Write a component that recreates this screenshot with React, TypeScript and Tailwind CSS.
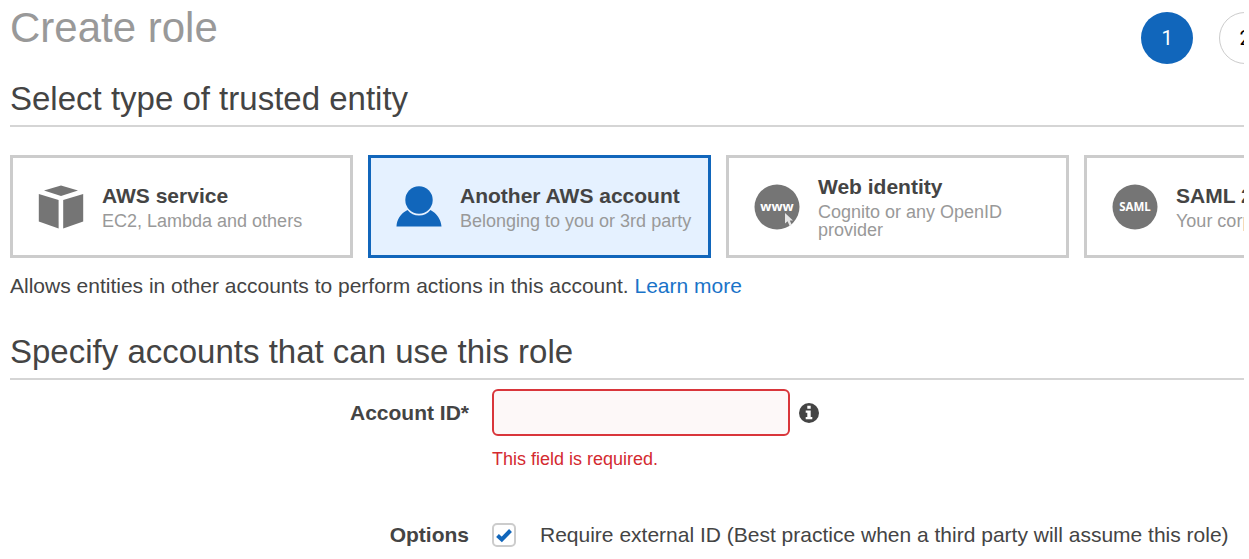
import { useState, type ReactNode } from "react";

function CubeIcon() {
  return (
    <svg viewBox="0 0 46 46" className="size-[46px]" fill="#757575" aria-hidden="true">
      <path d="M23 1.500 40 6.600 23 12 6 6.600Z" />
      <path d="M.8 10 20.600 16V44.500L.8 37.500Z" />
      <path d="M45.200 10 25.200 16V44.500L45.200 37.500Z" />
    </svg>
  );
}

function PersonIcon() {
  return (
    <svg viewBox="0 0 46 46" className="size-[46px]" fill="#1166bb" aria-hidden="true">
      <circle cx="23" cy="16" r="13.700" />
      <path d="M11.500 26C4.500 29.500 .8 35.500 .5 42.500H45.500C45 35.500 41 29.500 34.500 26C31.500 29.800 27.500 31.500 23 31.500S14.500 29.800 11.500 26Z" />
    </svg>
  );
}

function WebIcon() {
  return (
    <svg viewBox="0 0 46 46" className="size-[46px]" aria-hidden="true">
      <circle cx="23" cy="23" r="22.500" fill="#757575" />
      <text x="23" y="27" textAnchor="middle" fill="#fff" fontFamily="Noto Sans, sans-serif" fontWeight="700" fontSize="13">www</text>
      <path d="M31 29V39.500L33.600 37.200L35.600 42L37.800 41L35.800 36.400H39Z" fill="#e6e6e6" />
    </svg>
  );
}

function SamlIcon() {
  return (
    <svg viewBox="0 0 46 46" className="size-[46px]" aria-hidden="true">
      <circle cx="23" cy="23" r="22.500" fill="#757575" />
      <text x="23" y="27" textAnchor="middle" fill="#fff" fontFamily="Noto Sans, sans-serif" fontWeight="700" fontSize="11.500">SAML</text>
    </svg>
  );
}

function InfoIcon() {
  return (
    <svg viewBox="0 0 20 20" className="size-5" aria-hidden="true">
      <circle cx="10" cy="10" r="10" fill="#444" />
      <path d="M8.300 2.800H11.700V5.700H8.300ZM6.700 7.500H11.700V14H13.300V16.300H6.700V14H8.300V9.800H6.700Z" fill="#fff" />
    </svg>
  );
}

type Entity = { id: string; title: string; note: string; icon: ReactNode; wrap?: boolean };

const entities: Entity[] = [
  { id: "service", title: "AWS service", note: "EC2, Lambda and others", icon: <CubeIcon /> },
  { id: "account", title: "Another AWS account", note: "Belonging to you or 3rd party", icon: <PersonIcon /> },
  { id: "web", title: "Web identity", note: "Cognito or any OpenID provider", icon: <WebIcon />, wrap: true },
  { id: "saml", title: "SAML 2.0 federation", note: "Your corporate directory", icon: <SamlIcon /> },
];

function SectionTitle({ children }: { children: ReactNode }) {
  return (
    <h2 className="border-b-2 border-[#d5d5d5] pb-2 text-[33px] leading-[36px] text-[#444]">{children}</h2>
  );
}

export default function App() {
  const [selected, setSelected] = useState("account");
  const [accountId, setAccountId] = useState("");
  const [external, setExternal] = useState(true);

  return (
    <div className="bg-white pr-[5px] font-['Liberation_Sans',Arial,sans-serif] text-[#444]">
      <main className="overflow-hidden pb-3 pl-[10px]">
        <header className="flex h-[81px] items-start justify-between">
          <h1 className="pt-1 text-[42px] leading-[48px] text-[#999]">Create role</h1>
          <ol className="-mr-[27px] flex gap-[26px] pt-3 font-[Roboto,sans-serif] text-[20px]">
            <li className="flex size-[52px] items-center justify-center rounded-full bg-[#1166bb] text-white" aria-current="step">1</li>
            <li className="flex size-[52px] items-center justify-center rounded-full border border-[#ccc] text-black">2</li>
          </ol>
        </header>

        <SectionTitle>Select type of trusted entity</SectionTitle>

        <div className="mt-7 flex gap-[15px]">
          {entities.map((e) => (
            <button
              key={e.id}
              type="button"
              aria-pressed={selected === e.id}
              onClick={() => setSelected(e.id)}
              className={
                "flex h-[103px] w-[343px] shrink-0 items-center gap-[18px] border-3 pl-[25px] text-left " +
                (selected === e.id ? "border-[#1166bb] bg-[#e5f1ff]" : "border-[#ccc] bg-white")
              }
            >
              <span className="shrink-0">{e.icon}</span>
              <span className={e.wrap ? "w-[200px]" : "whitespace-nowrap"}>
                <span className="block pb-1 text-[21px] leading-[24px] font-bold">{e.title}</span>
                <span className="block text-[18px] leading-[18px] text-[#999]">{e.note}</span>
              </span>
            </button>
          ))}
        </div>

        <p className="mt-4 text-[21px] leading-[24px]">
          Allows entities in other accounts to perform actions in this account.{" "}
          <a href="#learn-more" className="text-[#1a73c8]">Learn more</a>
        </p>

        <div className="mt-9">
          <SectionTitle>Specify accounts that can use this role</SectionTitle>
        </div>

        <div className="mt-[9px] grid grid-cols-[459px_1fr] gap-x-[23px]">
          <label htmlFor="account-id" className="flex h-[47px] items-center justify-end text-[21px] leading-[24px] font-bold">
            Account ID*
          </label>
          <div>
            <div className="flex items-center gap-[9px]">
              <input
                id="account-id"
                type="text"
                value={accountId}
                onChange={(ev) => setAccountId(ev.target.value)}
                aria-invalid="true"
                aria-describedby="account-error"
                className="h-[47px] w-[298px] rounded-md border-2 border-[#d9363b] bg-[#fdf8f8] px-3 text-[20px] outline-none"
              />
              <InfoIcon />
            </div>
            <p id="account-error" className="mt-3 text-[18px] leading-[22px] text-[#d42a30]">This field is required.</p>
          </div>
        </div>

        <div className="mt-[53px] grid grid-cols-[459px_1fr] items-center gap-x-[23px] text-[21px] leading-[24px]">
          <span className="text-right font-bold">Options</span>
          <label className="flex items-center gap-6 whitespace-nowrap">
            <span className="relative grid size-6 place-items-center">
              <input
                type="checkbox"
                checked={external}
                onChange={(ev) => setExternal(ev.target.checked)}
                className="size-6 appearance-none rounded-[5px] border-2 border-[#ccc] bg-white"
              />
              {external && (
                <svg viewBox="0 0 16 16" className="pointer-events-none absolute size-4" aria-hidden="true">
                  <path d="M1.500 8.500 5.800 12.500 14.500 3.500" fill="none" stroke="#1166bb" strokeWidth="4" />
                </svg>
              )}
            </span>
            Require external ID (Best practice when a third party will assume this role)
          </label>
        </div>
      </main>
    </div>
  );
}
